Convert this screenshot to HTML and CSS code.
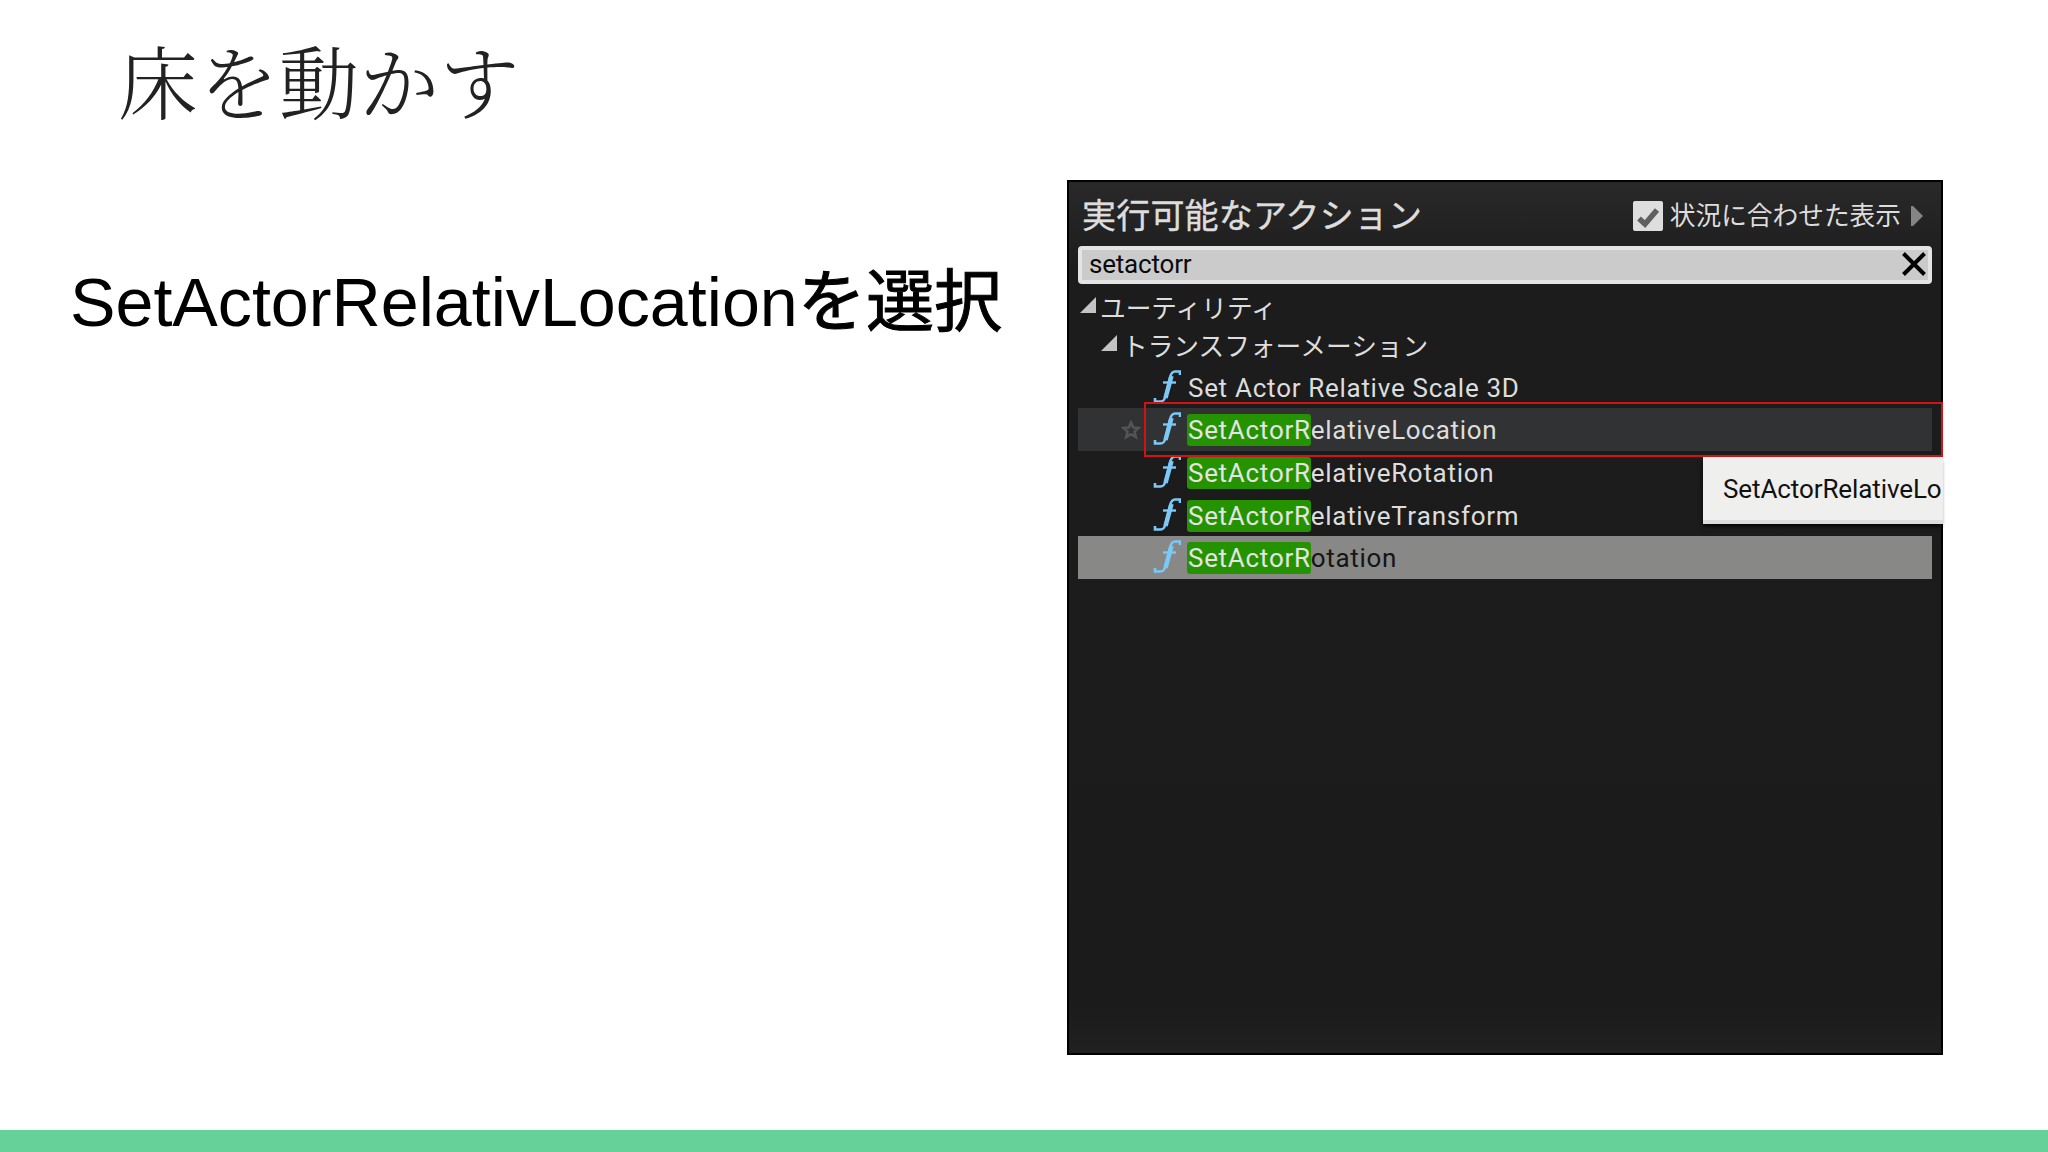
FILE: index.html
```html
<!DOCTYPE html>
<html lang="ja">
<head>
<title>床を動かす</title>
<meta charset="utf-8">
<meta name="viewport" content="width=device-width, initial-scale=1">
<link rel="stylesheet" href="styles.css">
</head>
<body>

<svg width="0" height="0" class="defs">
  <symbol id="func" viewBox="0 0 28 34">
    <path d="M27 5V1.500h-5c-3 0-4 2-5 6L12.500 26c-1 4-2 5.500-5 5.500H2V28" fill="none" stroke="#7cc8f8" stroke-width="2.600"/>
    <path d="M18.500 6L12.500 28" stroke="#7cc8f8" stroke-width="4.500"/>
    <path d="M10 12.500h13" stroke="#7cc8f8" stroke-width="2.400"/>
  </symbol>
</svg>

<div class="slide">
  <h1 class="title">床を動かす</h1>

  <div class="row">
    <p class="text">SetActorRelativLocation<span class="kanji">を選択</span></p>

    <div class="panel">
      <div class="panel_header">
        <h2 class="panel_title">実行可能なアクション</h2>
        <div class="context">
          <svg class="check" viewBox="0 0 30 30"><rect width="30" height="30" rx="2" fill="#dedede"/><path d="M6 17.500l6 5.500L24 9" fill="none" stroke="#606060" stroke-width="5.500"/></svg>
          <span class="context_label">状況に合わせた表示</span>
          <svg class="arrow" viewBox="0 0 12 20"><path d="M0 0h2l10 10L2 20H0z" fill="#858585"/></svg>
        </div>
      </div>

      <div class="search">
        <span>setactorr</span>
        <svg class="clear" viewBox="0 0 24 24"><path d="M1.500 1.500l21 21M22.500 1.500l-21 21" stroke="#000" stroke-width="4"/></svg>
      </div>

      <div class="group"><svg class="tri" viewBox="0 0 16 16"><path d="M16 0v16H0z" fill="#c4c4c4"/></svg><span>ユーティリティ</span></div>
      <div class="group sub"><svg class="tri" viewBox="0 0 16 16"><path d="M16 0v16H0z" fill="#c4c4c4"/></svg><span>トランスフォーメーション</span></div>

      <div class="list">
        <div class="item"><svg class="func"><use href="#func"/></svg><span class="name plain">Set Actor Relative Scale 3D</span></div>
        <div class="item hover">
          <svg class="star" viewBox="0 0 20 20"><path d="M10 2.500l2.200 5 5.300.5-4 3.600 1.300 5.400L10 14.200 5.200 17l1.300-5.400-4-3.600 5.300-.5z" fill="none" stroke="#545454" stroke-width="2.600"/></svg>
          <svg class="func"><use href="#func"/></svg><span class="name"><mark>SetActorR</mark>elativeLocation</span>
        </div>
        <div class="item"><svg class="func"><use href="#func"/></svg><span class="name"><mark>SetActorR</mark>elativeRotation</span></div>
        <div class="item"><svg class="func"><use href="#func"/></svg><span class="name"><mark>SetActorR</mark>elativeTransform</span></div>
        <div class="item selected"><svg class="func"><use href="#func"/></svg><span class="name"><mark>SetActorR</mark>otation</span></div>
      </div>

      <div class="tooltip">SetActorRelativeLo</div>
      <div class="frame"></div>
    </div>
  </div>

  <div class="footer"></div>
</div>

</body>
</html>
```

FILE: styles.css
```css
* {
  box-sizing: border-box;
}

body {
  margin: 0;
  font-family: "Liberation Sans", "Noto Sans CJK JP", sans-serif;
  background-color: #fff;
}

svg {
  display: block;
  flex: none;
}

.defs {
  position: absolute;
}

.slide {
  display: flex;
  flex-direction: column;
  height: 1152px;
  overflow: hidden;
}

.title {
  margin: 0;
  height: 180px;
  padding: 19px 0 0 118px;
  font-family: "Noto Serif CJK JP", "Noto Sans CJK JP", serif;
  font-size: 80px;
  font-weight: 300;
  line-height: 120px;
  letter-spacing: 0.4px;
  color: #222;
}

.row {
  display: flex;
  flex: 1;
  align-items: flex-start;
}

.text {
  margin: 0;
  width: 1067px;
  padding: 74px 0 0 70px;
  font-size: 68.2px;
  line-height: 96px;
  white-space: nowrap;
  color: #000;
}

.kanji {
  -webkit-text-stroke: 1px #000;
}

/* Action menu */
.panel {
  position: relative;
  width: 876px;
  height: 875px;
  padding: 0 9px;
  border: 2px solid #000;
  background: linear-gradient(#292929, #1c1c1c 90px, #1b1b1b 820px, #202020);
  font-family: Roboto, "Noto Sans CJK JP", sans-serif;
  font-size: 26px;
  color: #ddd;
  white-space: nowrap;
}

.panel_header {
  display: flex;
  justify-content: space-between;
  align-items: center;
  height: 64px;
  padding: 4px 9px 0 4px;
}

.panel_title {
  margin: 0;
  font-size: 34px;
  font-weight: 400;
  line-height: 46px;
  letter-spacing: 0.2px;
  -webkit-text-stroke: 0.4px #ddd;
}

.context {
  display: flex;
  align-items: center;
}

.check {
  width: 30px;
  height: 30px;
}

.context_label {
  margin: 0 10px 0 7px;
  font-size: 25.7px;
  line-height: 36px;
}

.arrow {
  width: 12px;
  height: 20px;
}

.search {
  display: flex;
  justify-content: space-between;
  align-items: center;
  height: 38px;
  padding: 0 2px 2px 7px;
  border: 4px solid #e4e4e4;
  border-radius: 4px;
  background-color: #cbcbcb;
  letter-spacing: -0.2px;
  color: #0a0a0a;
}

.clear {
  width: 24px;
  height: 24px;
}

.group {
  display: flex;
  align-items: center;
  height: 38px;
  padding: 6px 0 0 2px;
  font-size: 25.7px;
}

.group span {
  margin-left: 4px;
}

.group.sub {
  padding-left: 23px;
}

.group.sub span {
  margin-left: 5px;
}

.tri {
  width: 16px;
  height: 16px;
  margin-top: -3px;
}

.list {
  padding-top: 5.6px;
}

.item {
  display: flex;
  align-items: center;
  height: 42.6px;
  padding-left: 75px;
}

.item.hover {
  padding-left: 43px;
  background-color: #313233;
}

.item.selected {
  background-color: #888886;
  color: #151515;
}

.star {
  width: 20px;
  height: 20px;
  margin: 2px 12px 0 0;
}

.func {
  width: 28px;
  height: 34px;
}

.name {
  margin: 2px 0 0 6px;
  line-height: 32px;
  letter-spacing: 0.7px;
  font-kerning: none;
}

.name.plain {
  padding-left: 1px;
}

mark {
  display: inline-block;
  height: 32px;
  padding-left: 1px;
  border-radius: 3px;
  background-color: #259300;
  color: #e4e4e4;
}

.tooltip {
  position: absolute;
  left: 634px;
  top: 275px;
  width: 240px;
  height: 67px;
  padding-left: 20px;
  border-bottom: 4px solid #ddd;
  background-color: #efefee;
  box-shadow: -1px 3px 4px -1px #000;
  line-height: 64px;
  letter-spacing: -0.1px;
  color: #111;
  overflow: hidden;
}

/* Red outline round the chosen action */
.frame {
  position: absolute;
  left: 75px;
  top: 220px;
  width: 799px;
  height: 55px;
  border: 2px solid #d01414;
}

.footer {
  height: 22px;
  background-color: #66d299;
}
```
